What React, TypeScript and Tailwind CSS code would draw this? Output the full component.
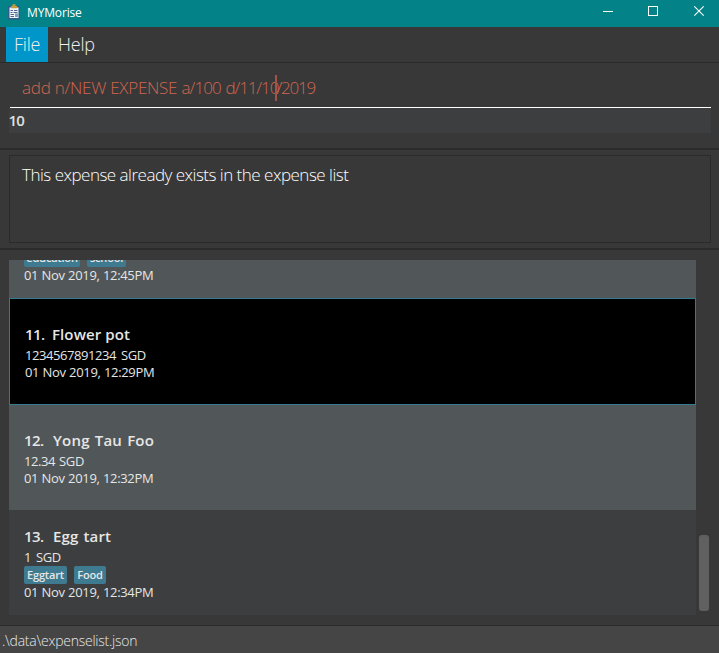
import React from "react";

type Expense = {
  id: string;
  name: string;
  nameClass: string;
  amount: string;
  amountClass: string;
  tags: { label: string; className: string }[];
  date: string;
  rowClass: string;
};

const expenses: Expense[] = [
  {
    id: "11.",
    name: "Flower pot",
    nameClass: "-ml-px tracking-[0.1px]",
    amount: "1234567891234 SGD",
    amountClass: "tracking-[-0.43px] [word-spacing:2px]",
    tags: [],
    date: "01 Nov 2019, 12:29PM",
    rowClass: "h-[107px] border border-[#357a90] bg-black pl-[15px] pt-[24px]",
  },
  {
    id: "12.",
    name: "Yong Tau Foo",
    nameClass: "pl-px tracking-[0.2px] [word-spacing:1px]",
    amount: "12.34 SGD",
    amountClass: "tracking-[-0.4px] [word-spacing:1px]",
    tags: [],
    date: "01 Nov 2019, 12:32PM",
    rowClass: "h-[105px] bg-[#515658] pl-[15px] pt-[24px]",
  },
  {
    id: "13.",
    name: "Egg tart",
    nameClass: "pl-px tracking-[0.15px] [word-spacing:1px]",
    amount: "1 SGD",
    amountClass: "tracking-[-0.4px] [word-spacing:2px]",
    tags: [
      { label: "Eggtart", className: "w-[43px]" },
      { label: "Food", className: "w-[32px]" },
    ],
    date: "01 Nov 2019, 12:34PM",
    rowClass: "h-[105px] bg-[#3c3e3f] pl-[15px] pt-[15px]",
  },
];

function Tag({ label, className }: { label: string; className: string }) {
  return (
    <span
      className={`flex h-[18px] shrink-0 items-center justify-center rounded-[2px] bg-[#3e7b91] text-[11px] font-semibold tracking-[-0.2px] whitespace-nowrap ${className}`}
    >
      {label}
    </span>
  );
}

function DateLine({ children }: { children: string }) {
  return <div className="h-[17px] text-[13px] leading-[17px] tracking-[-0.32px] [word-spacing:0.3px] whitespace-nowrap">{children}</div>;
}

function ExpenseRow({ e }: { e: Expense }) {
  return (
    <div className={`shrink-0 text-[#e6e6e6] ${e.rowClass}`}>
      <div className="flex h-[24px] text-[15px] leading-[22px] font-semibold whitespace-nowrap">
        <span className="w-[28px] tracking-[-0.6px]">{e.id}</span>
        <span className={e.nameClass}>{e.name}</span>
      </div>
      <div className={`h-[17px] text-[13px] leading-[17px] whitespace-nowrap ${e.amountClass}`}>{e.amount}</div>
      {e.tags.length > 0 && (
        <div className="flex gap-[7px]">
          {e.tags.map((t) => (
            <Tag key={t.label} {...t} />
          ))}
        </div>
      )}
      <DateLine>{e.date}</DateLine>
    </div>
  );
}

function ClipboardIcon() {
  return (
    <svg width="12" height="16" viewBox="0 0 12 16" className="shrink-0">
      <rect x="0" y="2" width="12" height="13.5" rx="1" fill="#315b88" />
      <rect x="1.5" y="3.5" width="9" height="10.5" fill="#eef4f8" />
      <path d="M3 4.3V2H4.5V0.3H7.5V2H9V4.3Z" fill="#c89b3c" />
      <path d="M2.5 6.5H5M6 6.5H9.5M2.5 8.5H4.5M5.5 8.5H9.5M2.5 10.5H6M2.5 12.5H6" stroke="#36587c" strokeWidth="0.9" />
      <rect x="7" y="9.5" width="3" height="3.5" fill="#7e9bb8" />
    </svg>
  );
}

export default function App() {
  return (
    <div className="flex h-[653px] w-[719px] flex-col overflow-hidden bg-[#383838] font-['Open_Sans','Noto_Sans',sans-serif]">
      <header className="flex h-[27px] shrink-0 items-center bg-[#038387] pl-2 text-white">
        <div className="flex h-full items-center pb-[4px]">
          <ClipboardIcon />
        </div>
        <span className="ml-[7px] pb-[3px] text-[12px] leading-[17px] tracking-[-0.15px]">MYMorise</span>
        <svg width="104" height="12" viewBox="0 0 104 12" className="mr-[14px] mb-[5px] ml-auto" fill="none" stroke="white">
          <path d="M2 6.5H12" />
          <rect x="47.5" y="1.5" width="9" height="9" />
          <path d="M93.3 1.3L102.7 10.7M102.7 1.3L93.3 10.7" strokeWidth="1.1" />
        </svg>
      </header>
      <nav className="flex h-9 shrink-0 border-b border-[#2b2b2b] pl-1.5 text-[18px] leading-[34px] font-light tracking-[-0.2px] text-[#f0f0f0]">
        <div className="w-[42px] bg-[#0096c9] pl-2">File</div>
        <div className="pl-[10px]">Help</div>
      </nav>
      <section className="flex h-[87px] shrink-0 flex-col border-b-2 border-[#2b2b2b] pr-2 pl-[9px]">
        <div className="ml-px flex h-[45px] items-center border-b border-white pt-[6px] pl-3 text-[17px] font-light whitespace-pre text-[#d06651]">
          <span className="tracking-[-0.25px]">add n/NEW EXPENSE </span>
          <span className="w-[44px] tracking-[-0.9px]">a/100 </span>
          <span className="w-[50px] tracking-[-1.1px]">d/11/10</span>
          <span className="-mr-px h-[26px] w-[2px] bg-[#9d5648]" />
          <span className="tracking-[-1.2px]">/2019</span>
        </div>
        <div className="h-[25px] bg-[#3c3e3f] text-[15px] leading-[25px] font-semibold tracking-[-0.8px] text-[#e0e0e0]">
          <span className="-ml-[0.5px]">10</span>
        </div>
      </section>
      <section className="h-[100px] shrink-0 border-b-2 border-[#2b2b2b] pt-[5px] pr-2 pl-[9px]">
        <div className="h-[88px] border border-[#2b2b2b] pt-[7px] pl-3 text-[17px] leading-[24px] font-light tracking-[-0.5px] text-white">
          This expense already exists in the expense list
        </div>
      </section>
      <main className="flex h-[375px] shrink-0 pt-[10px] pl-[9px]">
        <div className="flex h-[355px] w-[687px] flex-col overflow-hidden">
          <div className="flex h-[38px] shrink-0 flex-col justify-end bg-[#515658] pb-[14px] pl-[15px] text-[#e6e6e6]">
            <div className="flex shrink-0 gap-[7px]">
              <Tag label="education" className="w-[56px]" />
              <Tag label="school" className="w-[39px]" />
            </div>
            <DateLine>01 Nov 2019, 12:45PM</DateLine>
          </div>
          {expenses.map((e) => (
            <ExpenseRow key={e.id} e={e} />
          ))}
        </div>
        <div className="mt-[275px] ml-[3px] h-[76px] w-[10px] rounded-[3px] bg-[#606060]" />
      </main>
      <footer className="h-[28px] shrink-0 border-t border-[#2b2b2b] bg-[#454545] pl-[2px] text-[14px] leading-[29px] font-light tracking-[-0.25px] text-[#e8e8e8]">
        .\data\expenselist.json
      </footer>
    </div>
  );
}
